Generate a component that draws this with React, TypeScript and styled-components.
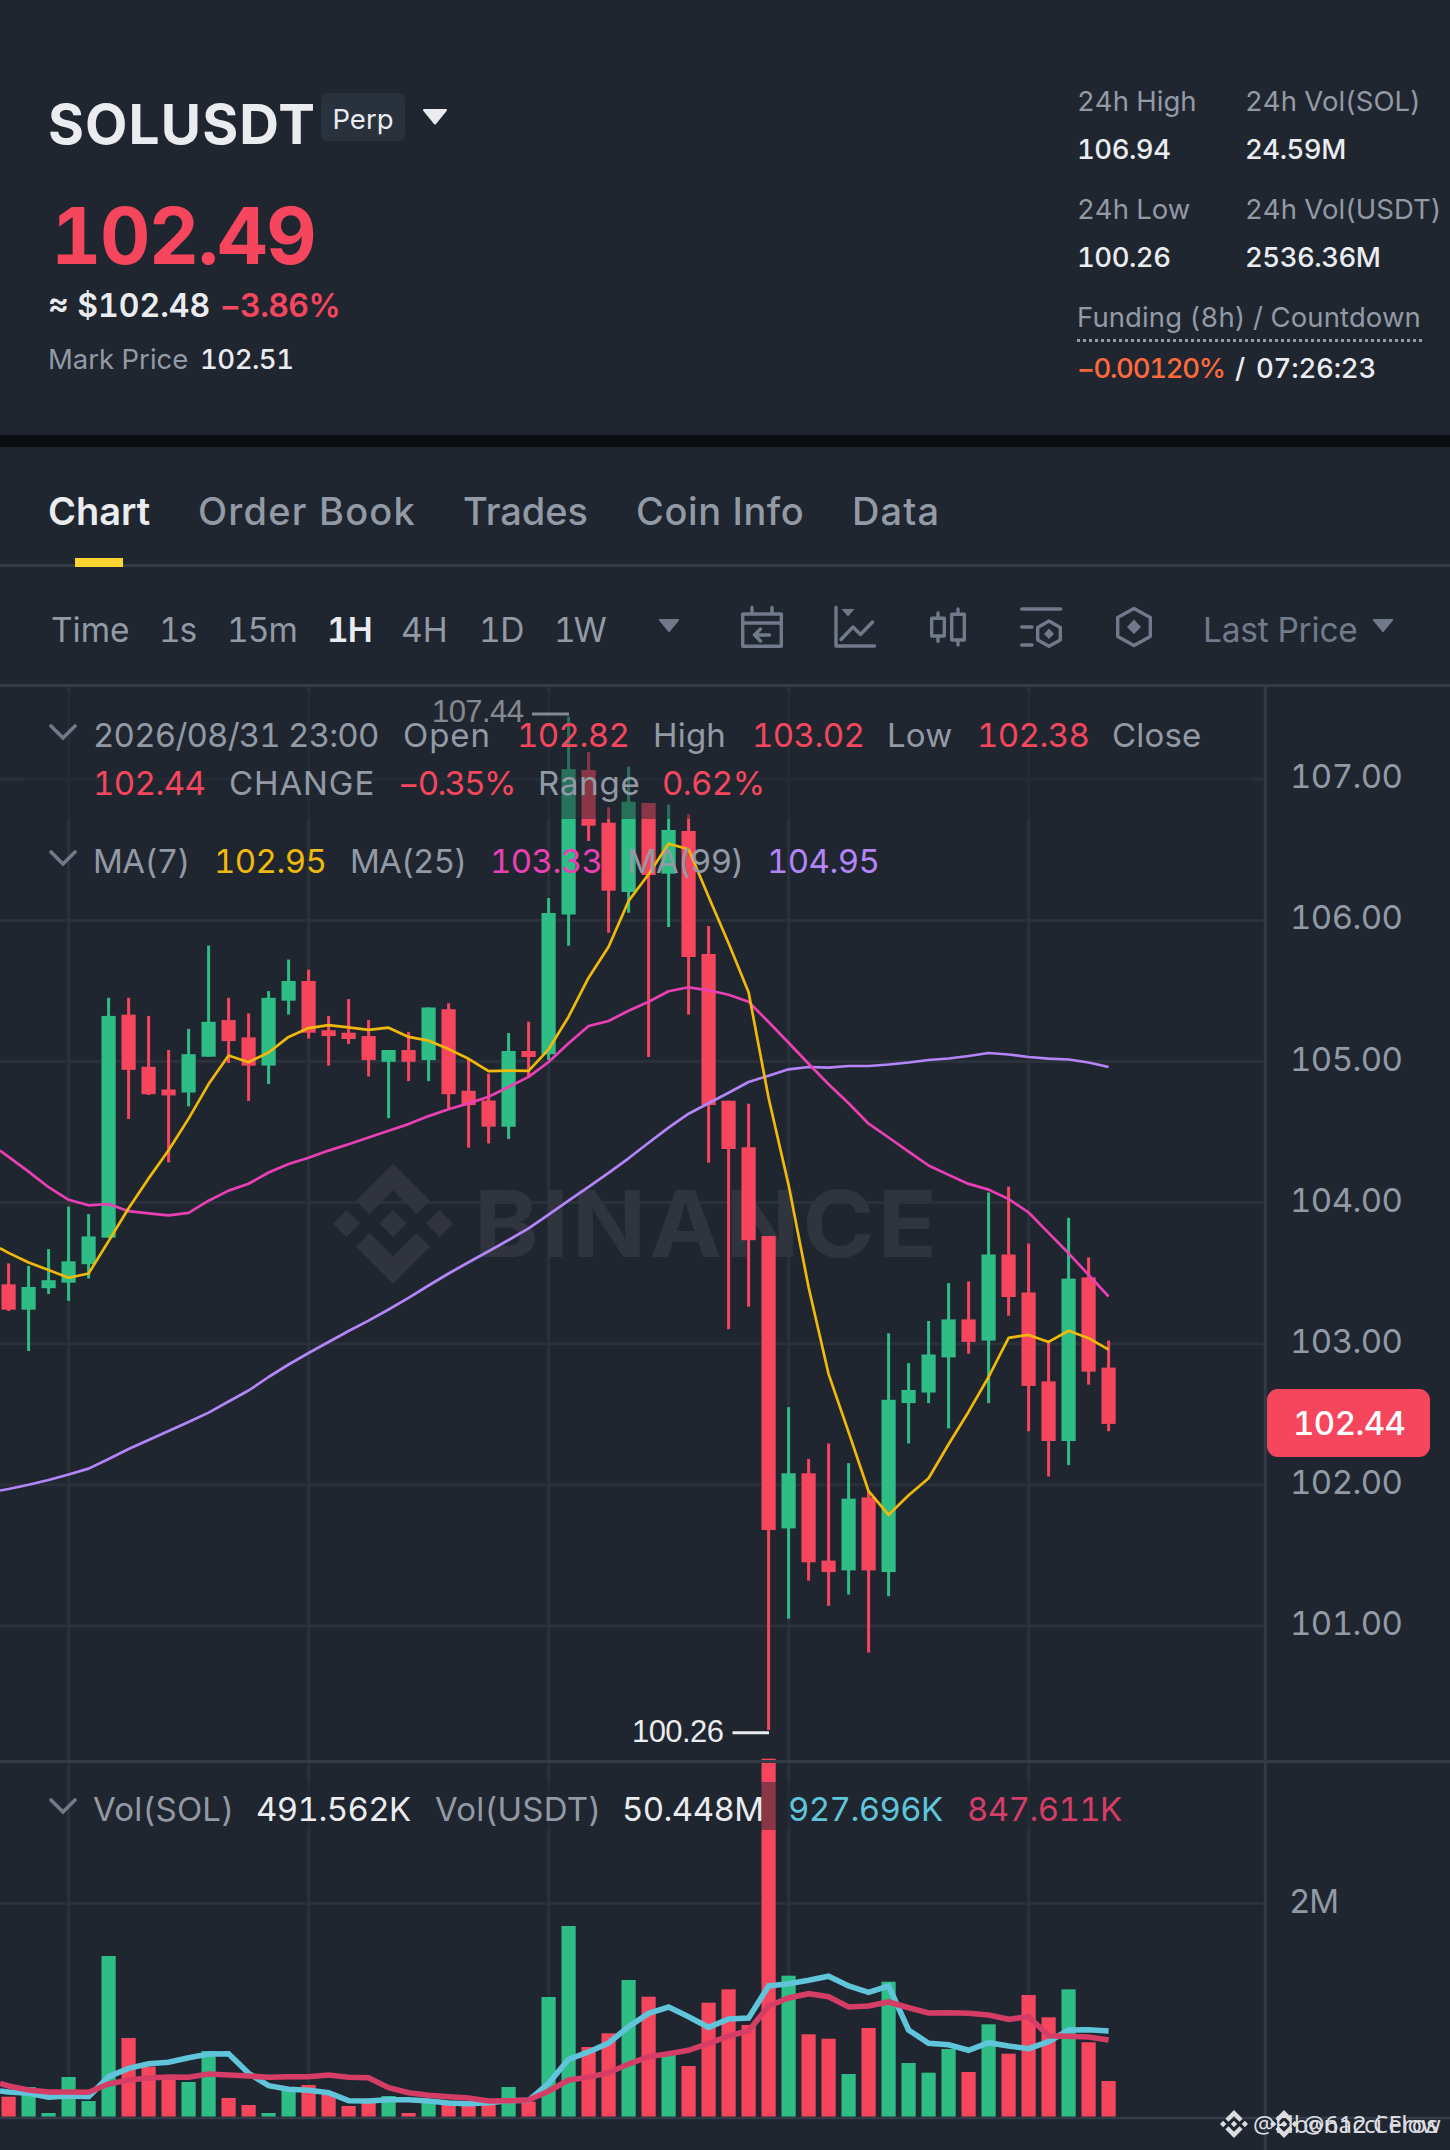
import React from "react";
import styled, { createGlobalStyle } from "styled-components";

const theme = {
  colors: {
    bg: "#202630",
    divider: "#0b0e11",
    line: "#333b47",
    grid: "#2a313b",
    text: "#eaecef",
    muted: "#929aa5",
    icon: "#707a8a",
    up: "#2ebd85",
    down: "#f6465d",
    yellow: "#f0b90b",
    accent: "#fcd535",
    orange: "#ff693d",
    pink: "#eb40b5",
    purple: "#b385f8",
    blue: "#60c5db",
    crimson: "#d53d66",
    watermark: "#30343e",
  },
};

const c = theme.colors;

// [open side up, wick top, body top, body bottom, wick bottom, volume top]
type Candle = [boolean, number, number, number, number, number];

const U = true;
const D = false;

const candles: Candle[] = [
  [D, 1263.4, 1284.4, 1309.7, 1311, 2096.7],
  [U, 1265.9, 1287, 1309.7, 1351, 2087],
  [U, 1249.1, 1280.2, 1288.2, 1294.1, 2113],
  [U, 1206.6, 1261.3, 1282.7, 1300.8, 2077],
  [U, 1214.1, 1236.4, 1264.2, 1278.5, 2101],
  [U, 997.8, 1015.9, 1237.7, 1237.7, 1956],
  [D, 997.8, 1014.6, 1069.8, 1119, 2038],
  [D, 1015.9, 1066.8, 1094.2, 1095, 2066.7],
  [D, 1050, 1089.5, 1095.4, 1162.4, 2078],
  [U, 1028.9, 1054.2, 1092.5, 1106.4, 2082],
  [U, 945.6, 1021.8, 1056.7, 1056.7, 2051],
  [D, 997.8, 1020.1, 1041.1, 1063, 2098],
  [D, 1013.4, 1037.4, 1065.6, 1100.9, 2105],
  [U, 991.1, 997.8, 1065.6, 1084.1, 2113],
  [U, 959.5, 981, 1000.7, 1014.6, 2089],
  [D, 969.6, 981, 1032.7, 1038.6, 2085],
  [D, 1015.9, 1030.2, 1036.1, 1065.6, 2094],
  [D, 999.1, 1032.7, 1039, 1044.1, 2106],
  [D, 1020.1, 1036.1, 1060.1, 1076.5, 2103],
  [U, 1050, 1050, 1061.8, 1118.2, 2096],
  [D, 1031.9, 1050, 1061.8, 1081.1, 2113],
  [U, 1007.5, 1007.5, 1060.1, 1081.1, 2102],
  [D, 1003.3, 1009.2, 1094.2, 1109.7, 2103],
  [D, 1058.8, 1090.8, 1105.1, 1147.6, 2105],
  [D, 1073.6, 1100.5, 1126.6, 1143.4, 2103],
  [U, 1033, 1051, 1126.7, 1139, 2087],
  [D, 1021.7, 1051, 1057, 1076.7, 2101.7],
  [U, 898, 913, 1054.3, 1060, 1997],
  [U, 716.7, 769, 914.5, 945.7, 1926],
  [D, 752, 770, 825.7, 841, 2047],
  [D, 807.3, 822.7, 890.7, 932.7, 2033.3],
  [U, 766.7, 801.7, 892, 912.7, 1980],
  [D, 803, 803, 875, 1057, 1996.7],
  [U, 804.7, 830, 873.7, 927, 2055],
  [D, 814.3, 831, 957, 1014.7, 2066],
  [D, 926, 954, 1105, 1162.7, 2002.7],
  [D, 1100.7, 1100.7, 1149, 1329.2, 1989.3],
  [D, 1103.7, 1147.3, 1240.2, 1306.7, 2025],
  [D, 1236.1, 1236.1, 1530, 1730, 1758.7],
  [U, 1407.2, 1473.3, 1528.4, 1618.6, 1975.7],
  [D, 1459, 1473.3, 1562.3, 1580.6, 2034.3],
  [D, 1443.5, 1560.6, 1572.1, 1605.9, 2038.7],
  [U, 1463.1, 1498.6, 1570.4, 1594.5, 2074],
  [D, 1491, 1497.4, 1570.4, 1652.5, 2028],
  [U, 1333.3, 1399.8, 1572.1, 1596.2, 1981.7],
  [U, 1363.1, 1390, 1403.1, 1443.5, 2063],
  [U, 1321, 1354.5, 1392.5, 1403.1, 2072.7],
  [U, 1283.1, 1319.4, 1357.4, 1428.4, 2049],
  [D, 1281.4, 1319.4, 1341.9, 1353.7, 2072],
  [U, 1192.5, 1254.5, 1340.6, 1403.1, 2024.3],
  [D, 1186.7, 1254.5, 1297, 1315.7, 2053.7],
  [D, 1243.5, 1292.5, 1385.9, 1431.2, 1995],
  [D, 1340.6, 1381.4, 1441, 1476.5, 2017.3],
  [U, 1217.8, 1278.6, 1441, 1465.1, 1989.3],
  [D, 1257.4, 1277.4, 1371.6, 1384.7, 2042.3],
  [D, 1340.6, 1367.6, 1423.9, 1431.2, 2081],
];

const ma7 = [
  1252.9, 1262.5, 1270.1, 1277.7, 1273.5, 1241.1, 1208.2, 1178.4, 1150.2, 1118.6, 1084.1, 1055.5, 1062.2, 1052.5,
  1036.9, 1028.1, 1025.1, 1027.3, 1029.8, 1027.7, 1036.9, 1040.7, 1049.1, 1058.8, 1071.2, 1070.6, 1070.8, 1049.3,
  1016.7, 977.7, 946.7, 901, 874.3, 843.7, 849.3, 896.7, 943.3, 992.3, 1098, 1185.1, 1287.2, 1374.1, 1432.1, 1491.2,
  1514.9, 1495.3, 1478.2, 1444.3, 1411.7, 1377, 1337.8, 1334.9, 1341.9, 1330.8, 1338.2, 1349.6,
];

const ma25 = [
  1156.9, 1171.6, 1187.2, 1199.8, 1205.3, 1204, 1211.2, 1213.3, 1215.4, 1212.9, 1200.7, 1190.6, 1183.8, 1172.5, 1164,
  1157.7, 1150.6, 1144.3, 1137.5, 1130.8, 1124.1, 1116.1, 1109.3, 1103.4, 1096.7, 1087, 1076.9, 1062, 1043.3, 1026,
  1021, 1010.7, 1001.7, 991.3, 987.3, 990.3, 994.7, 1001.7, 1022, 1042.7, 1063.7, 1084.3, 1103.3, 1123.7, 1137.5,
  1151.6, 1165.5, 1174.9, 1183.9, 1189.6, 1199, 1212.5, 1232.9, 1253.3, 1274.9, 1296.5,
];

const ma99 = [
  1489, 1484.8, 1480, 1474.5, 1468.6, 1459, 1449, 1440, 1431, 1422, 1412.6, 1401.5, 1390.5, 1377, 1364.5, 1353, 1342,
  1331, 1320.6, 1309.5, 1297.9, 1285.5, 1273.5, 1262.3, 1251.2, 1240, 1228.4, 1214.6, 1200.7, 1186.8, 1172.9, 1158.3,
  1142.7, 1127.7, 1113.7, 1103.3, 1092.7, 1082, 1075.7, 1069.3, 1067, 1067.7, 1066, 1066, 1064.5, 1062.5, 1060, 1058.5,
  1056, 1053, 1054.5, 1057, 1058.7, 1059.5, 1062.5, 1067,
];

const volFast = [
  2092, 2093.3, 2097.3, 2096, 2096.7, 2076.7, 2068.3, 2063.7, 2062.3, 2057.7, 2054, 2053.7, 2073.3, 2085.7, 2089.3,
  2090.3, 2092.7, 2100.7, 2101, 2099.7, 2099.7, 2101, 2103, 2103.7, 2102.7, 2100.7, 2100.3, 2083.3, 2059.3, 2052, 2043,
  2026.7, 2013.3, 2007, 2016.7, 2027.3, 2019, 2018, 1986, 1983.7, 1980.3, 1976.3, 1986, 1992.3, 1986, 2030, 2043.3,
  2044.7, 2050.3, 2042.7, 2046, 2048.7, 2041.7, 2030, 2029.7, 2031,
];

const volSlow = [
  2086, 2090, 2092, 2092, 2092.3, 2084, 2080, 2078, 2077, 2077.3, 2074, 2075, 2076, 2077.3, 2076.7, 2076.7, 2075,
  2077.3, 2077.7, 2087.7, 2092.7, 2095.3, 2096.7, 2098, 2101, 2100.7, 2100, 2091.3, 2080, 2077.3, 2072.7, 2064, 2056.7,
  2053.7, 2050.3, 2043.3, 2036, 2030.7, 2006, 1998, 1993.7, 1996.7, 2007, 2006, 2002, 2007.7, 2013, 2012.7, 2013.3,
  2015, 2019.3, 2016.7, 2035.7, 2036.3, 2037, 2040,
];

const priceLabels = ["107.00", "106.00", "105.00", "104.00", "103.00", "102.00", "101.00"];

const xAt = (i: number) => 8.6 + i * 20;
const priceY = (i: number) => 779.3 + i * 141.1;
const linePoints = (start: number, values: number[]) =>
  [`0,${start}`, ...values.map((v, i) => `${xAt(i)},${v}`)].join(" ");

const Caret = ({ size, color }: { size: number; color: string }) => (
  <svg width={size} height={size * 0.62} viewBox="0 0 26 16">
    <path d="M2 1H24L13 14.5Z" fill={color} stroke={color} strokeWidth={2} strokeLinejoin="round" />
  </svg>
);

const Chevron = () => (
  <svg width={28} height={17} viewBox="0 0 28 17">
    <path d="M2 2L14 14L26 2" fill="none" stroke={c.icon} strokeWidth={3.6} strokeLinecap="round" />
  </svg>
);

const BinanceMark = ({ size, color }: { size: number; color: string }) => (
  <svg width={size} height={size} viewBox="0 0 120 120">
    <g fill={color}>
      <path d="M60 0L97 37L83.5 50.5L60 27L36.5 50.5L23 37Z" />
      <path d="M60 120L97 83L83.5 69.5L60 93L36.5 69.5L23 83Z" />
      <path d="M60 46.5L73.5 60L60 73.5L46.5 60Z" />
      <path d="M13.5 46.5L27 60L13.5 73.5L0 60Z" />
      <path d="M106.5 46.5L120 60L106.5 73.5L93 60Z" />
    </g>
  </svg>
);

const CalendarIcon = () => (
  <ToolIcon width={44} height={44} viewBox="740 605 44 44">
    <path d="M742.7 614H781.3V646.3H742.7ZM742.7 623H781.3" />
    <path d="M752 607.5V613M772 607.5V613M769.5 635H755.5M760.5 629L754.5 635L760.5 641" />
  </ToolIcon>
);

const TrendIcon = () => (
  <ToolIcon width={44} height={44} viewBox="833 605 44 44">
    <path d="M836 607.5V646H874.5M841 639.5L853 627L860.5 634.5L872.5 622" />
    <path d="M841.5 609H854.5L848 616.5Z" fill={c.icon} stroke="none" />
  </ToolIcon>
);

const CandlesIcon = () => (
  <ToolIcon width={44} height={44} viewBox="926 605 44 44">
    <path d="M931.7 618.2H944.3V636H931.7ZM951.7 614.2H964.3V640H951.7Z" />
    <path d="M938 613V618M938 636V641.5M958 609V614M958 640V645" />
  </ToolIcon>
);

const IndicatorIcon = () => (
  <ToolIcon width={46} height={44} viewBox="1019 605 46 44">
    <path d="M1021.7 609H1060.7M1021.7 627H1032M1021.7 645H1032" />
    <path d="M1049 621L1060.3 627.5V640L1049 646.3L1037.7 640V627.5Z" />
    <path d="M1049 628.5L1054 634L1049 639L1044 634Z" fill={c.icon} stroke="none" />
  </ToolIcon>
);

const SettingsIcon = () => (
  <ToolIcon width={40} height={44} viewBox="1114 605 40 44">
    <path d="M1134 608.5L1150.3 617.5V636.5L1134 645.5L1117.7 636.5V617.5Z" />
    <path d="M1134 619.5L1141 627L1134 634L1127 627Z" fill={c.icon} stroke="none" />
  </ToolIcon>
);

const Chart = () => (
  <svg width={1450} height={1463} viewBox="0 687 1450 1463">
    <g stroke={c.grid} strokeWidth={3}>
      {[3, 15, 27, 39, 51].map((i) => (
        <line key={i} x1={xAt(i)} x2={xAt(i)} y1={687} y2={2117} />
      ))}
      {priceLabels.map((label, i) => (
        <line key={label} x1={0} x2={1264} y1={priceY(i)} y2={priceY(i)} />
      ))}
      <line x1={0} x2={1264} y1={1903.5} y2={1903.5} />
    </g>

    <svg x={333} y={1163.5} width={120} height={120}>
      <BinanceMark size={120} color={c.watermark} />
    </svg>
    <WatermarkText x={474} y={1257} textLength={466} lengthAdjust="spacingAndGlyphs">
      BINANCE
    </WatermarkText>

    {candles.map(([up, wickTop, top, bottom, wickBottom, volTop], i) => (
      <g key={i} fill={up ? c.up : c.down}>
        <rect x={xAt(i) - 1.5} y={wickTop} width={3} height={wickBottom - wickTop} />
        <rect x={xAt(i) - 7.1} y={top} width={14.2} height={bottom - top} />
        <rect x={xAt(i) - 7.1} y={volTop} width={14.2} height={2116.7 - volTop} />
      </g>
    ))}

    <g stroke={c.line} strokeWidth={3}>
      <line x1={0} x2={1450} y1={1761.5} y2={1761.5} />
      <line x1={0} x2={1450} y1={2118} y2={2118} strokeWidth={2.4} />
      <line x1={1265.3} x2={1265.3} y1={687} y2={2150} />
    </g>

    <g fill="none" strokeWidth={2.7} strokeLinejoin="round">
      <polyline points={linePoints(1490.5, ma99)} stroke={c.purple} />
      <polyline points={linePoints(1150.6, ma25)} stroke={c.pink} />
      <polyline points={linePoints(1248.2, ma7)} stroke={c.yellow} />
    </g>
    <g fill="none" strokeWidth={5.6}>
      <polyline points={linePoints(2091, volFast)} stroke={c.blue} />
      <polyline points={linePoints(2083.3, volSlow)} stroke={c.crimson} />
    </g>

    <ExtremeText x={432} y={722} textLength={92}>
      107.44
    </ExtremeText>
    <line x1={532} x2={569} y1={714} y2={714} stroke={c.text} strokeWidth={3} />
    <ExtremeText x={632} y={1742} textLength={92}>
      100.26
    </ExtremeText>
    <line x1={732.5} x2={769} y1={1732.7} y2={1732.7} stroke={c.text} strokeWidth={3} />

    {priceLabels.map((label, i) => (
      <AxisText key={label} x={1290} y={priceY(i) + 9} textLength={113}>
        {label}
      </AxisText>
    ))}
    <AxisText x={1289} y={1913} textLength={50}>
      2M
    </AxisText>
    <rect x={1267} y={1389} width={163} height={68} rx={11} fill={c.down} />
    <BadgeText x={1293} y={1435} textLength={113}>
      102.44
    </BadgeText>
  </svg>
);

const App = () => {
  return (
    <>
      <GlobalStyle />
      <Page>
        <Header>
          <Ticker>
            <TitleRow>
              <Symbol>SOLUSDT</Symbol>
              <Tag>Perp</Tag>
              <Caret size={26} color={c.text} />
            </TitleRow>
            <Price>102.49</Price>
            <SubPrice>
              <SubValue $width={172}>≈ $102.48</SubValue>
              <SubValue $color={c.down} $spacing={-0.6}>
                −3.86%
              </SubValue>
            </SubPrice>
            <MarkPrice>
              <Label $width={152}>Mark Price</Label>
              <Value>102.51</Value>
            </MarkPrice>
          </Ticker>
          <Stats>
            <StatGrid>
              <Stat>
                <Label>24h High</Label>
                <Value>106.94</Value>
              </Stat>
              <Stat>
                <Label>24h Vol(SOL)</Label>
                <Value>24.59M</Value>
              </Stat>
              <Stat>
                <Label>24h Low</Label>
                <Value>100.26</Value>
              </Stat>
              <Stat>
                <Label>24h Vol(USDT)</Label>
                <Value>2536.36M</Value>
              </Stat>
            </StatGrid>
            <FundingLabel>Funding (8h) / Countdown</FundingLabel>
            <FundingRow>
              <Value $color={c.orange} $width={158} $spacing={-1.3}>
                −0.00120%
              </Value>
              <Value $width={21}>/</Value>
              <Value $spacing={-0.2}>07:26:23</Value>
            </FundingRow>
          </Stats>
        </Header>

        <Tabs>
          <Tab $active $width={150}>
            Chart
          </Tab>
          <Tab $width={265} $spacing={1.2}>
            Order Book
          </Tab>
          <Tab $width={173}>Trades</Tab>
          <Tab $width={216} $spacing={0.6}>
            Coin Info
          </Tab>
          <Tab $width={90} $spacing={1.1}>
            Data
          </Tab>
        </Tabs>

        <Toolbar>
          <Interval $width={108}>Time</Interval>
          <Interval $width={68} $spacing={-1.2}>
            1s
          </Interval>
          <Interval $width={100} $spacing={-1}>
            15m
          </Interval>
          <Interval $width={74} $spacing={-1} $active>
            1H
          </Interval>
          <Interval $width={78}>4H</Interval>
          <Interval $width={75} $spacing={-0.5}>
            1D
          </Interval>
          <Interval $width={104} $spacing={-2}>
            1W
          </Interval>
          <Caret size={22} color={c.icon} />
          <Tools>
            <CalendarIcon />
            <TrendIcon />
            <CandlesIcon />
            <IndicatorIcon />
            <SettingsIcon />
          </Tools>
          <LastPrice>Last Price</LastPrice>
          <Caret size={22} color={c.icon} />
        </Toolbar>

        <ChartArea>
          <Chart />
          <Legend $top={4} $height={128} $shade>
            <LegendToggle $top={33}>
              <Chevron />
            </LegendToggle>
            <LegendBody $top={20}>
              <LegendRow>
                <LegendItem $width={310} $spacing={-0.8}>
                  2026/08/31 23:00
                </LegendItem>
                <LegendItem $width={114} $spacing={0.9}>
                  Open
                </LegendItem>
                <LegendItem $width={136} $color={c.down}>
                  102.82
                </LegendItem>
                <LegendItem $width={99}>High</LegendItem>
                <LegendItem $width={135} $color={c.down}>
                  103.02
                </LegendItem>
                <LegendItem $width={90}>Low</LegendItem>
                <LegendItem $width={135} $color={c.down}>
                  102.38
                </LegendItem>
                <LegendItem $width={90}>Close</LegendItem>
              </LegendRow>
              <LegendRow>
                <LegendItem $width={136} $color={c.down}>
                  102.44
                </LegendItem>
                <LegendItem $width={169} $spacing={0.9}>
                  CHANGE
                </LegendItem>
                <LegendItem $width={140} $color={c.down} $spacing={-1.7}>
                  −0.35%
                </LegendItem>
                <LegendItem $width={124} $spacing={0.8}>
                  Range
                </LegendItem>
                <LegendItem $width={100} $color={c.down}>
                  0.62%
                </LegendItem>
              </LegendRow>
            </LegendBody>
          </Legend>
          <Legend $top={150} $height={48}>
            <LegendToggle $top={13}>
              <Chevron />
            </LegendToggle>
            <LegendBody $top={0}>
              <LegendRow>
                <LegendItem $width={121} $spacing={-0.6}>
                  MA(7)
                </LegendItem>
                <LegendItem $width={136} $color={c.yellow}>
                  102.95
                </LegendItem>
                <LegendItem $width={140} $spacing={-0.8}>
                  MA(25)
                </LegendItem>
                <LegendItem $width={137} $color={c.pink}>
                  103.33
                </LegendItem>
                <LegendItem $width={140} $spacing={-0.8}>
                  MA(99)
                </LegendItem>
                <LegendItem $width={110} $color={c.purple}>
                  104.95
                </LegendItem>
              </LegendRow>
            </LegendBody>
          </Legend>
          <Legend $top={1095} $height={48}>
            <LegendToggle $top={16}>
              <Chevron />
            </LegendToggle>
            <LegendBody $top={3} $shade>
              <LegendRow>
                <LegendItem $width={163}>Vol(SOL)</LegendItem>
                <LegendItem $width={179} $color={c.text}>
                  491.562K
                </LegendItem>
                <LegendItem $width={187}>Vol(USDT)</LegendItem>
                <LegendItem $width={166} $color={c.text}>
                  50.448M
                </LegendItem>
                <LegendItem $width={179} $color={c.blue}>
                  927.696K
                </LegendItem>
                <LegendItem $width={156} $color={c.crimson}>
                  847.611K
                </LegendItem>
              </LegendRow>
            </LegendBody>
          </Legend>
          <Author $left={1220}>
            <BinanceMark size={28} color="#dcdde0" />
            <span>@Fibonacci Flow</span>
          </Author>
          <Author $left={1270}>
            <BinanceMark size={28} color="#dcdde0" />
            <span>@612 Ceros</span>
          </Author>
        </ChartArea>
      </Page>
    </>
  );
};

export default App;

const GlobalStyle = createGlobalStyle`
  * {
    box-sizing: border-box;
    margin: 0;
    padding: 0;
  }

  body {
    background-color: ${c.bg};
    font-family: Inter, "Liberation Sans", sans-serif;
    font-variant-numeric: tabular-nums;
    color: ${c.text};
  }

  svg {
    display: block;
    flex-shrink: 0;
  }
`;

const Page = styled.div`
  width: 1450px;
  height: 2150px;
  display: flex;
  flex-direction: column;
  overflow: hidden;
  white-space: nowrap;
  background-color: ${c.bg};
`;

const Header = styled.header`
  display: flex;
  justify-content: space-between;
  height: 447px;
  border-bottom: 12px solid ${c.divider};
`;

const Ticker = styled.div`
  padding: 93px 0 0 48px;
`;

const TitleRow = styled.div`
  display: flex;
  height: 62px;

  svg {
    margin: 16px 0 0 17px;
  }
`;

const Symbol = styled.h1`
  width: 273px;
  font-size: 55px;
  font-weight: 700;
  line-height: 62px;
  letter-spacing: 1.1px;
`;

const Tag = styled.span`
  width: 84px;
  height: 48px;
  padding-top: 4px;
  border-radius: 6px;
  background-color: #29313d;
  font-size: 27.5px;
  line-height: 44px;
  text-align: center;
`;

const Price = styled.div`
  margin-top: 35px;
  padding-left: 3px;
  font-size: 78px;
  font-weight: 700;
  line-height: 91px;
  letter-spacing: -1.5px;
  color: ${c.down};
`;

const SubPrice = styled.div`
  display: flex;
  line-height: 50px;
`;

const SubValue = styled.span<{ $width?: number; $color?: string; $spacing?: number }>`
  width: ${({ $width }) => ($width ? `${$width}px` : "auto")};
  font-size: 32px;
  font-weight: 600;
  letter-spacing: ${({ $spacing }) => $spacing || 0}px;
  color: ${({ $color }) => $color || c.text};
`;

const MarkPrice = styled.div`
  display: flex;
  line-height: 56px;
`;

const Label = styled.span<{ $width?: number }>`
  width: ${({ $width }) => ($width ? `${$width}px` : "auto")};
  font-size: 27.5px;
  color: ${c.muted};
`;

const Value = styled.span<{ $width?: number; $color?: string; $spacing?: number }>`
  width: ${({ $width }) => ($width ? `${$width}px` : "auto")};
  font-size: 27.5px;
  font-weight: 500;
  letter-spacing: ${({ $spacing }) => $spacing ?? -0.5}px;
  color: ${({ $color }) => $color || c.text};
`;

const Stats = styled.div`
  width: 373px;
  padding-top: 77px;
`;

const StatGrid = styled.div`
  display: grid;
  grid-template-columns: 168px 1fr;
  row-gap: 12px;
`;

const Stat = styled.div`
  display: flex;
  flex-direction: column;
  line-height: 48px;
`;

const FundingLabel = styled.div`
  width: 345px;
  height: 49px;
  margin-top: 12px;
  font-size: 27.5px;
  line-height: 48px;
  letter-spacing: 0.1px;
  color: ${c.muted};
  background: repeating-linear-gradient(90deg, ${c.muted} 0 3px, transparent 3px 6px) 0 100% / 100% 3px no-repeat;
`;

const FundingRow = styled.div`
  display: flex;
  line-height: 52px;
`;

const Tabs = styled.nav`
  display: flex;
  height: 120px;
  padding-left: 48px;
  border-bottom: 3px solid ${c.line};
`;

const Tab = styled.a<{ $active?: boolean; $width: number; $spacing?: number }>`
  position: relative;
  width: ${({ $width }) => $width}px;
  font-size: 38px;
  font-weight: ${({ $active }) => ($active ? 600 : 500)};
  line-height: 129px;
  letter-spacing: ${({ $spacing }) => $spacing || 0}px;
  color: ${({ $active }) => ($active ? c.text : c.muted)};

  &::after {
    content: "";
    display: ${({ $active }) => ($active ? "block" : "none")};
    position: absolute;
    left: 27px;
    top: 111px;
    width: 48px;
    height: 9px;
    background-color: ${c.accent};
  }
`;

const Toolbar = styled.div`
  display: flex;
  align-items: center;
  height: 120px;
  padding: 0 0 0 51px;
  border-bottom: 3px solid ${c.line};
`;

const Interval = styled.span<{ $active?: boolean; $width: number; $spacing?: number }>`
  width: ${({ $width }) => $width}px;
  padding-top: 9px;
  font-size: 33.5px;
  font-weight: ${({ $active }) => ($active ? 600 : 400)};
  letter-spacing: ${({ $spacing }) => $spacing || 0}px;
  color: ${({ $active }) => ($active ? c.text : c.muted)};
`;

const Tools = styled.div`
  display: flex;
  gap: 49px;
  width: 463px;
  margin-left: 60px;
`;

const ToolIcon = styled.svg`
  position: relative;
  top: 1px;
  fill: none;
  stroke: ${c.icon};
  stroke-width: 3.4px;
  stroke-linecap: round;
  stroke-linejoin: round;
`;

const LastPrice = styled.span`
  width: 169px;
  padding-top: 9px;
  font-size: 33.5px;
  letter-spacing: -0.2px;
  color: ${c.icon};
`;

const ChartArea = styled.div`
  position: relative;
  height: 1463px;
`;

const WatermarkText = styled.text`
  font-size: 92px;
  font-weight: 700;
  letter-spacing: 3px;
  fill: ${c.watermark};
`;

const ExtremeText = styled.text`
  font-family: "Liberation Sans", sans-serif;
  font-size: 31px;
  fill: ${c.text};
`;

const AxisText = styled.text`
  font-size: 33px;
  fill: ${c.muted};
`;

const BadgeText = styled.text`
  font-size: 33px;
  font-weight: 500;
  fill: #ffffff;
`;

const Legend = styled.div<{ $top: number; $height: number; $shade?: boolean }>`
  position: absolute;
  top: ${({ $top }) => $top}px;
  left: 24px;
  display: flex;
  width: 1230px;
  height: ${({ $height }) => $height}px;
  padding-left: 25px;
  background-color: ${({ $shade }) => ($shade ? "rgba(32, 38, 48, 0.5)" : "transparent")};
`;

const LegendToggle = styled.div<{ $top: number }>`
  width: 36px;
  padding-top: ${({ $top }) => $top}px;
`;

const LegendBody = styled.div<{ $top: number; $shade?: boolean }>`
  padding: ${({ $top }) => $top}px 20px 0 8px;
  background-color: ${({ $shade }) => ($shade ? "rgba(32, 38, 48, 0.5)" : "transparent")};
`;

const LegendRow = styled.div`
  display: flex;
  line-height: 48px;
`;

// figures are set a little tighter than the words between them
const LegendItem = styled.span<{ $width: number; $color?: string; $spacing?: number }>`
  width: ${({ $width }) => $width}px;
  font-size: 33px;
  letter-spacing: ${({ $spacing, $color }) => $spacing ?? ($color ? -0.6 : 0.2)}px;
  color: ${({ $color }) => $color || c.muted};
`;

const Author = styled.div<{ $left: number }>`
  position: absolute;
  top: 1420px;
  left: ${({ $left }) => $left}px;
  display: flex;
  align-items: center;
  gap: 5px;
  font-family: "Noto Sans", sans-serif;
  font-size: 24px;
  line-height: 34px;
  letter-spacing: 0.2px;
  color: #dcdde0;
`;
